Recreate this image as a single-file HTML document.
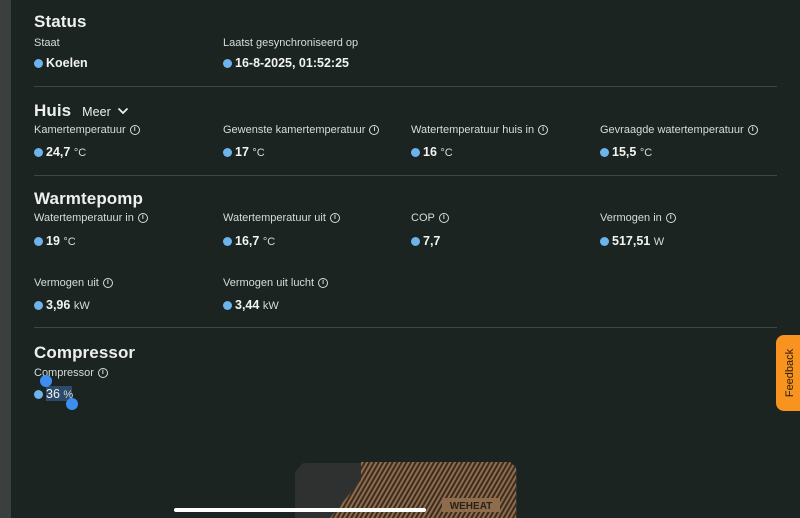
<!DOCTYPE html>
<html><head><meta charset="utf-8"><style>
*{margin:0;padding:0;box-sizing:border-box}
html,body{width:800px;height:518px;overflow:hidden}
body{background:#1b2421;font-family:"Liberation Sans",sans-serif;color:#eef0ee;position:relative}
.strip{position:absolute;left:0;top:0;width:11px;height:518px;background:#3b403e}
.h{position:absolute;font-size:17px;font-weight:bold;letter-spacing:0.1px}
.l{position:absolute;font-size:11px;color:#d8dcd9}
.v{position:absolute;font-size:12.5px;font-weight:bold;color:#f2f4f2}
.v i{display:inline-block;width:9px;height:9px;border-radius:50%;background:#6db3ec;margin-right:3px;vertical-align:-0.5px}
.v small{font-weight:normal;font-size:11px;color:#d8dcd9}
.info{display:inline-block;width:10px;height:10px;border:1px solid #d8dcd9;border-radius:50%;font-size:7px;text-align:center;line-height:8px;margin-left:4px;vertical-align:2px;font-weight:bold}
.hr{position:absolute;left:34px;width:743px;height:1px;background:#3e4744}
.fb{position:absolute;left:776px;top:335px;width:28px;height:76px;background:#f7931e;border-radius:8px 0 0 8px}
.fb span{position:absolute;left:50%;top:50%;transform:translate(-50%,-50%) rotate(-90deg);font-size:11px;color:#2a1a08;white-space:nowrap}
.dot{position:absolute;width:12px;height:12px;border-radius:50%;background:#3d8ef0}
</style></head><body>
<div class="strip"></div>
<div class="h" style="left:34px;top:12px">Status</div>
<div class="l" style="left:34px;top:37px">Staat</div>
<div class="v" style="left:34px;top:56px"><i></i>Koelen</div>
<div class="l" style="left:223px;top:37px">Laatst gesynchroniseerd op</div>
<div class="v" style="left:223px;top:56px"><i></i>16-8-2025, 01:52:25</div>
<div class="hr" style="top:86px"></div>

<div class="h" style="left:34px;top:101px">Huis <span style="font-size:12.5px;font-weight:normal;margin-left:6px">Meer</span><svg width="12" height="8" viewBox="0 0 12 8" style="margin-left:6px;vertical-align:1px"><path d="M1.5 1.5 6 6 10.5 1.5" stroke="#eef0ee" stroke-width="1.8" fill="none"/></svg></div>
<div class="l" style="left:34px;top:124px">Kamertemperatuur<span class="info">i</span></div>
<div class="v" style="left:34px;top:145px"><i></i>24,7 <small>°C</small></div>
<div class="l" style="left:223px;top:124px">Gewenste kamertemperatuur<span class="info">i</span></div>
<div class="v" style="left:223px;top:145px"><i></i>17 <small>°C</small></div>
<div class="l" style="left:411px;top:124px">Watertemperatuur huis in<span class="info">i</span></div>
<div class="v" style="left:411px;top:145px"><i></i>16 <small>°C</small></div>
<div class="l" style="left:600px;top:124px">Gevraagde watertemperatuur<span class="info">i</span></div>
<div class="v" style="left:600px;top:145px"><i></i>15,5 <small>°C</small></div>
<div class="hr" style="top:175px"></div>

<div class="h" style="left:34px;top:189px">Warmtepomp</div>
<div class="l" style="left:34px;top:212px">Watertemperatuur in<span class="info">i</span></div>
<div class="v" style="left:34px;top:234px"><i></i>19 <small>°C</small></div>
<div class="l" style="left:223px;top:212px">Watertemperatuur uit<span class="info">i</span></div>
<div class="v" style="left:223px;top:234px"><i></i>16,7 <small>°C</small></div>
<div class="l" style="left:411px;top:212px">COP<span class="info">i</span></div>
<div class="v" style="left:411px;top:234px"><i></i>7,7</div>
<div class="l" style="left:600px;top:212px">Vermogen in<span class="info">i</span></div>
<div class="v" style="left:600px;top:234px"><i></i>517,51 <small>W</small></div>
<div class="l" style="left:34px;top:277px">Vermogen uit<span class="info">i</span></div>
<div class="v" style="left:34px;top:298px"><i></i>3,96 <small>kW</small></div>
<div class="l" style="left:223px;top:277px">Vermogen uit lucht<span class="info">i</span></div>
<div class="v" style="left:223px;top:298px"><i></i>3,44 <small>kW</small></div>
<div class="hr" style="top:327px"></div>

<div class="h" style="left:34px;top:343px">Compressor</div>
<div class="l" style="left:34px;top:367px">Compressor<span class="info">i</span></div>
<div style="position:absolute;left:46px;top:386px;width:26px;height:15px;background:#2c4a6a"></div>
<div class="v" style="left:34px;top:387px;font-weight:normal"><i></i>36 <small>%</small></div>
<div class="dot" style="left:40px;top:375px"></div>
<div class="dot" style="left:66px;top:398px"></div>

<svg style="position:absolute;left:290px;top:458px" width="232" height="60" viewBox="0 0 232 60">
<defs><pattern id="st" width="4" height="4" patternUnits="userSpaceOnUse" patternTransform="rotate(30)"><rect width="4" height="4" fill="#3a2c20"/><rect width="2" height="4" fill="#8f6d4c"/></pattern></defs>
<path d="M12 6 Q12 5 16 5 L220 5 Q227 6 227 14 L227 60 L5 60 L5 14 Z" fill="#2e3130"/>
<path d="M71 4 L220 4 L226 10 L226 60 L40 60 L71 22 Z" fill="url(#st)"/>
<path d="M195 38 L226 38 L224 56 L152 56 L148 48 L195 48 Z" fill="none"/>
<rect x="152" y="40" width="58" height="14" fill="#8f6d4c"/>
<text x="181" y="51" font-family="Liberation Sans" font-size="10" font-weight="bold" fill="#2a2018" text-anchor="middle">WEHEAT</text>
</svg>
<div style="position:absolute;left:174px;top:508px;width:252px;height:4px;background:#fff;border-radius:2px"></div>

<div class="fb"><span>Feedback</span></div>
</body></html>
